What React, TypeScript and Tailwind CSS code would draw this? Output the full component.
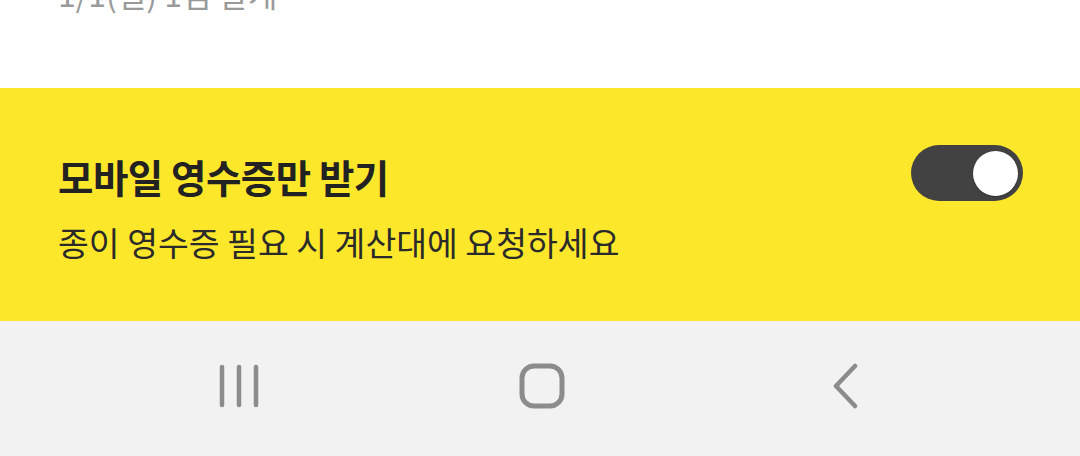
export default function App() {
  const font = { fontFamily: '"Noto Sans CJK KR", "Noto Sans", sans-serif' };

  return (
    <div className="w-[1080px] h-[456px] flex flex-col overflow-hidden bg-white" style={font}>
      {/* clipped previous row */}
      <div className="h-[88px] shrink-0 bg-white overflow-hidden px-[58px]">
        <p className="-mt-[27px] text-[32px] leading-[40px] text-[#9a9a9a]">1/1(일) 1점 발게</p>
      </div>

      {/* mobile receipt option */}
      <div className="h-[233px] shrink-0 bg-[#fde72a] flex items-start justify-between pl-[58px] pr-[57px] pt-[57px]">
        <div className="flex flex-col mt-[7px]">
          <h2 className="text-[38.5px] leading-[48px] font-bold text-[#222222] tracking-[-0.5px]">
            모바일 영수증만 받기
          </h2>
          <p className="mt-[21px] text-[33.5px] leading-[42px] text-[#2a2a2a]">
            종이 영수증 필요 시 계산대에 요청하세요
          </p>
        </div>
        <div className="w-[112px] h-[56px] rounded-full bg-[#424242] flex items-center justify-end pr-[5px]">
          <div className="w-[45px] h-[45px] rounded-full bg-white shadow-[0_1px_2px_rgba(0,0,0,0.25)]" />
        </div>
      </div>

      {/* system nav bar */}
      <div className="flex-1 bg-[#f2f2f2] flex items-center pl-[218px] pb-[6px]">
        <svg width="46" height="46" viewBox="0 0 46 46" className="text-[#8c8c8c]">
          <g stroke="currentColor" strokeWidth="4.5" strokeLinecap="round">
            <line x1="4" y1="4" x2="4" y2="42" />
            <line x1="21" y1="4" x2="21" y2="42" />
            <line x1="38" y1="4" x2="38" y2="42" />
          </g>
        </svg>
        <svg width="46" height="46" viewBox="0 0 46 46" className="ml-[255px] text-[#8c8c8c]">
          <rect x="3" y="3" width="40" height="40" rx="12" fill="none" stroke="currentColor" strokeWidth="5" />
        </svg>
        <svg width="30" height="46" viewBox="0 0 30 46" className="ml-[263px] text-[#8c8c8c]">
          <polyline
            points="27,3 8,23 27,43"
            fill="none"
            stroke="currentColor"
            strokeWidth="4.5"
            strokeLinecap="round"
            strokeLinejoin="round"
          />
        </svg>
      </div>
    </div>
  );
}
